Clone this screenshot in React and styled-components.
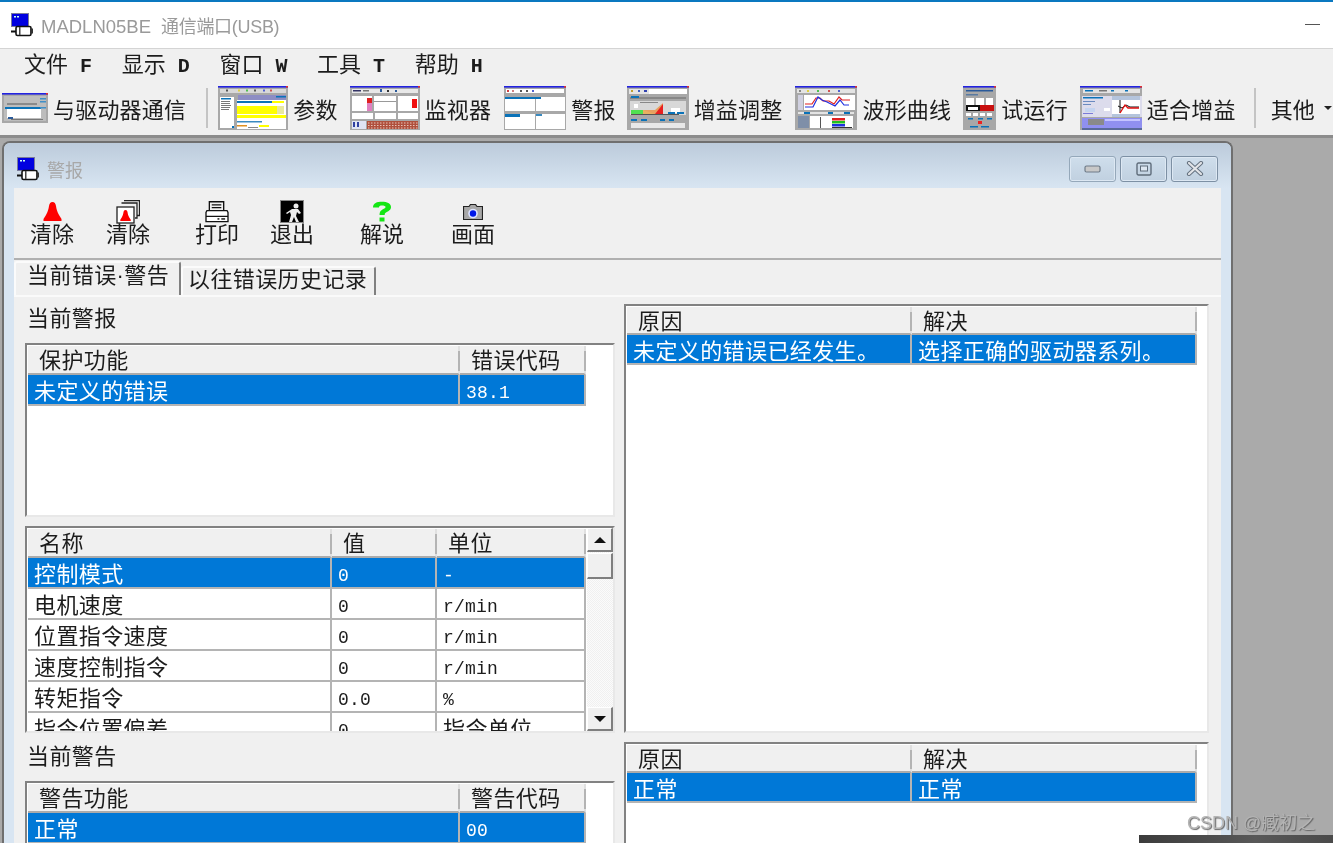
import React from "react";
import styled, { createGlobalStyle } from "styled-components";

const CJK = `"Noto Sans CJK SC", "Noto Sans", sans-serif`;
const MONO = `"Liberation Mono", "Noto Sans CJK SC", monospace`;

const Global = createGlobalStyle`
  html, body { margin: 0; padding: 0; height: 843px; overflow: hidden; background: #aaa; }
  body { font-family: ${CJK}; color: #1c1c1c; }
  * { box-sizing: border-box; }
`;

const Screen = styled.div`
  position: relative;
  width: 1333px;
  height: 843px;
  overflow: hidden;
  display: flex;
  flex-direction: column;
  filter: blur(0.35px);
`;
const TitleBar = styled.header`
  height: 49px;
  flex: none;
  background: #fff;
  border-top: 2px solid #0a78c0;
  border-bottom: 1px solid #d4d4d4;
  display: flex;
  align-items: center;
  padding: 0 13px 0 11px;
`;
const AppTitle = styled.div`
  margin-left: 7px;
  font-family: "Liberation Sans", ${CJK};
  font-size: 18.5px;
  color: #9a9a9a;
  white-space: pre;
  flex: 1;
`;
const TitlePort = styled.span`
  margin-left: 10px;
  font-size: 18px;
  letter-spacing: -0.3px;
`;
const DashBtn = styled.div`
  width: 15px;
  height: 1px;
  margin-top: -2px;
  background: #555;
`;
const MenuBar = styled.nav`
  height: 35px;
  flex: none;
  background: #f0f0f0;
  display: flex;
  align-items: center;
  padding: 0 0 4px 24px;
`;
const MenuItem = styled.div`
  width: 97.7px;
  font-size: 22px;
  line-height: 30px;
  white-space: pre;
`;
const MenuKey = styled.span`
  margin-left: 12px;
  font-family: ${MONO};
  font-size: 20px;
  font-weight: 700;
`;
const ToolBar = styled.div`
  height: 54px;
  flex: none;
  background: #f0f0f0;
  border-bottom: 3px solid;
  border-image: linear-gradient(#e4e4e4 0 33%, #bdbdbd 33% 66%, #8c8c8c 66%) 3;
  display: flex;
  align-items: center;
  padding: 0 0 3px 2px;
`;
const Tool = styled.div`
  display: flex;
  align-items: center;
  gap: 5px;
  margin-left: ${(p) => p.$ml || 0}px;
  flex: none;
  font-size: 22px;
  letter-spacing: 0.2px;
  white-space: nowrap;
`;
const ToolSep = styled.div`
  width: 2px;
  height: 40px;
  background: #c4c4c4;
  margin: 0 ${(p) => p.$r}px 0 ${(p) => p.$l}px;
  flex: none;
`;
const Caret = styled.span`
  width: 0;
  height: 0;
  margin-left: 4px;
  border-top: 4px solid #222;
  border-left: 4px solid transparent;
  border-right: 4px solid transparent;
`;
const Workspace = styled.main`
  flex: 1;
  min-height: 0;
  background: #aaa;
  padding: 3px 0 0 2px;
`;
const Window = styled.section`
  width: 1231px;
  height: 720px;
  border: 2px solid #6f6f6f;
  border-bottom: 0;
  border-radius: 8px 8px 0 0;
  background: #d8e5f2;
  display: flex;
  flex-direction: column;
  padding: 0 10px;
  overflow: hidden;
`;
const WinTitle = styled.div`
  height: 45px;
  flex: none;
  margin: 0 -10px;
  padding: 6px 13px 0 13px;
  background: linear-gradient(#bccbdb, #d8e5f2);
  display: flex;
  align-items: center;
`;
const WinName = styled.div`
  margin-left: 7px;
  flex: 1;
  font-size: 18px;
  color: #a8a8a8;
`;
const WinBtn = styled.div`
  width: 47px;
  height: 26px;
  margin-left: 4px;
  border: 1px solid ${(p) => p.$border || "#95a8ba"};
  border-radius: 3px;
  background: linear-gradient(#cfdeec, #c0d0e0);
  box-shadow: inset 0 0 0 1px #dde8f3;
  display: flex;
  align-items: center;
  justify-content: center;
`;
const Body = styled.div`
  flex: 1;
  min-height: 0;
  background: #f0f0f0;
  display: flex;
  flex-direction: column;
`;
const CmdBar = styled.div`
  height: 72px;
  flex: none;
  border-bottom: 2px solid #b0b0b0;
  display: flex;
  padding-left: 16px;
`;
const Cmd = styled.div`
  width: 44px;
  margin-left: ${(p) => p.$ml || 0}px;
  flex: none;
  display: flex;
  flex-direction: column;
  align-items: center;
  font-size: 22px;
  line-height: 28px;
  white-space: nowrap;
`;
const CmdIcon = styled.div`
  height: 31px;
  padding-top: 14px;
  display: flex;
  align-items: flex-start;
  justify-content: center;
  margin-bottom: -1px;
`;
const TabRow = styled.div`
  height: 37px;
  flex: none;
  display: flex;
  align-items: flex-end;
  border-bottom: 2px solid #fafafa;
`;
const Tab = styled.div`
  height: ${(p) => (p.$active ? 34 : 29)}px;
  width: ${(p) => p.$w}px;
  flex: none;
  padding-left: ${(p) => p.$pl}px;
  border-top: 2px solid #fbfbfb;
  border-left: 2px solid #fbfbfb;
  border-right: 2px solid #808080;
  border-radius: 3px 3px 0 0;
  font-family: "Liberation Sans", ${CJK};
  font-size: 22px;
  line-height: ${(p) => (p.$active ? 25 : 24)}px;
  letter-spacing: 0.4px;
  white-space: nowrap;
`;
const Page = styled.div`
  flex: 1;
  min-height: 0;
  display: flex;
  gap: 9px;
  padding-left: 11px;
  overflow: hidden;
`;
const LeftCol = styled.div`
  width: 590px;
  flex: none;
  display: flex;
  flex-direction: column;
`;
const RightCol = styled.div`
  width: 585px;
  flex: none;
  padding-top: 7px;
  display: flex;
  flex-direction: column;
  gap: 9px;
`;
const Caption = styled.div`
  height: ${(p) => p.$h}px;
  flex: none;
  padding: ${(p) => p.$top}px 0 0 2px;
  font-size: 22px;
  line-height: 30px;
  letter-spacing: 0.4px;
`;
const Frame = styled.div`
  position: relative;
  height: ${(p) => p.$h}px;
  flex: none;
  margin-bottom: ${(p) => p.$mb || 0}px;
  padding: 1px 0 0 1px;
  background: #fff;
  border-style: solid;
  border-color: #828282 #e8e8e8 #e8e8e8 #828282;
  border-width: 2px;
  overflow: hidden;
`;
const Table = styled.div`
  display: grid;
  grid-template-columns: ${(p) => p.$cols};
  grid-template-rows: ${(p) => p.$hh || 29}px;
  grid-auto-rows: ${(p) => p.$rh || 31}px;
  width: ${(p) => p.$w}px;
`;
const Head = styled.div`
  background: #f0f0f0;
  padding-left: 11px;
  font-size: 22px;
  line-height: 25px;
  letter-spacing: 0.4px;
  border-bottom: 2px solid #ababab;
  border-right: 2px solid #e0e0e0;
  position: relative;
  &:not(:last-child)::after {
    content: "";
    position: absolute;
    right: -2px;
    top: 5px;
    bottom: 2px;
    width: 2px;
    background: #b4b4b4;
  }
  &:last-child { border-right: 2px solid #b8b8b8; }
`;
const Cell = styled.div`
  background: ${(p) => (p.$sel ? "#0078d7" : "#fff")};
  color: ${(p) => (p.$sel ? "#fff" : "#1c1c1c")};
  padding-left: 6px;
  font-family: ${MONO};
  font-size: ${(p) => (p.$latin ? 18 : 22)}px;
  line-height: ${(p) => (p.$latin ? 36 : 37)}px;
  letter-spacing: ${(p) => (p.$latin ? 0.2 : 0.4)}px;
  border-bottom: 2px solid #b4b4b4;
  border-right: 2px solid #b4b4b4;
  white-space: nowrap;
  overflow: hidden;
`;
const Scroll = styled.div`
  position: absolute;
  top: 0;
  right: 0;
  bottom: 0;
  width: 26px;
  background: repeating-conic-gradient(#f0f0f0 0 25%, #fbfbfb 0 50%) 0 0 / 2px 2px;
  display: flex;
  flex-direction: column;
`;
const ScrollBtn = styled.div`
  height: ${(p) => p.$h}px;
  margin-top: ${(p) => p.$mt || 0}px;
  flex: none;
  background: #f0f0f0;
  border-style: solid;
  border-color: #fff #7f7f7f #7f7f7f #fff;
  border-width: 1px 2px 2px 1px;
  display: flex;
  align-items: center;
  justify-content: center;
`;
const Arrow = styled.span`
  width: 0;
  height: 0;
  border-left: 6px solid transparent;
  border-right: 6px solid transparent;
  ${(p) => (p.$up ? "border-bottom: 6px solid #111;" : "border-top: 6px solid #111;")}
`;
const Watermark = styled.div`
  position: absolute;
  left: 1187px;
  top: 810px;
  font-family: "Liberation Sans", ${CJK};
  font-size: 18px;
  line-height: 27px;
  color: #b4b4b4;
  text-shadow: 1px 1px 1px #666;
  white-space: nowrap;
`;
const DarkBar = styled.div`
  position: absolute;
  left: 1139px;
  right: 0;
  bottom: 0;
  height: 8px;
  background: linear-gradient(90deg, #3c3c3c, #585858 60%, #4a4a4a);
`;

/* ---------- drawings ---------- */
const Rects = ({ list }) =>
  list.map(([x, y, w, h, fill], i) => <rect key={i} x={x} y={y} width={w} height={h} fill={fill} />);

const BLUE = "#0a72b8";
const Thumb = ({ w, h, rects, children }) => (
  <svg width={w} height={h} viewBox={`0 0 ${w} ${h}`} style={{ flex: "none", display: "block" }}>
    <rect width={w} height={h} fill="#a8a8a8" />
    <rect width={w} height="1.6" fill="#2222e0" />
    <rect x={w - 2} width="2" height="1.6" fill="#e03030" />
    <Rects list={rects} />
    {children}
  </svg>
);

const t1 = [
  [2, 3, 42, 25, "#bdbdbd"], [5, 10, 30, 2, "#8a8a8a"], [3, 14, 36, 2, BLUE], [5, 16, 34, 9, "#fff"],
  [38, 5, 6, 1.5, "#3f8fc8"], [38, 8, 6, 1.5, "#3f8fc8"], [38, 14, 6, 1.5, "#3f8fc8"], [6, 24, 5, 2, "#2a5a9a"], [9, 26, 32, 1, "#777"],
];
const t2 = [
  [2, 3, 66, 4, "#d8d8d8"], [8, 3.5, 2, 2, "#555"], [20, 3.5, 2, 2, "#e0d040"], [28, 3.5, 2, 2, "#50c050"], [36, 3.5, 2, 2, "#555"], [45, 3.5, 2, 2, "#5060d0"], [52, 3.5, 2, 2, "#d05050"],
  [2, 11, 14, 31, "#fff"], [3, 12, 10, 1.5, BLUE], [3, 15, 9, 1, "#777"], [3, 17, 9, 1, "#777"], [3, 19, 10, 1, "#777"], [3, 21, 9, 1, "#777"], [3, 23, 8, 1, "#777"], [14, 40, 2, 2, BLUE],
  [20, 9, 48, 5, "#8d8dc4"], [58, 10, 10, 1.5, BLUE], [19, 14, 49, 29, "#fff"], [19, 15, 35, 2, BLUE], [54, 15, 12, 2, "#ffff00"],
  [19, 20, 47, 8, "#ffff00"], [59, 20, 7, 8, "#e8e8a0"], [19, 29, 49, 3, "#ffff00"], [19, 35, 25, 1.5, "#3a8ac0"],
  [19, 39, 10, 1.5, "#e09020"], [41, 39, 10, 2, "#ffff00"], [30, 41, 10, 1, "#888"],
];
const t3 = [
  [2, 3, 66, 4, "#e8e8e8"], [3, 4, 8, 1.5, "#336"], [13, 4, 6, 1.5, "#777"], [30, 3, 2, 3, "#2a5a9a"], [37, 4, 2, 2, "#333"], [45, 4, 2, 2, "#2a5a9a"],
  [2, 10, 20, 15, "#fff"], [24, 10, 22, 15, "#fff"], [48, 10, 20, 15, "#fff"], [17, 12, 5, 13, "#e080c0"], [17, 12, 5, 5, "#e02020"], [62, 13, 5, 9, "#f01010"], [24, 15, 22, 1, "#999"],
  [2, 27, 21, 6, "#fff"], [25, 27, 21, 6, "#fff"], [48, 27, 20, 6, "#fff"], [2, 35, 14, 8, "#dfe4f4"], [3, 36, 2, 5, "#3040a0"], [7, 36, 2, 5, "#3040a0"],
  [17, 35, 51, 8, "#b0503c"],
];
const t4 = [
  [2, 3, 58, 4, "#fff"], [3, 4, 2, 2, "#d04040"], [8, 4, 2, 2, "#d08080"], [16, 4, 2, 2, "#555"], [22, 4, 2, 2, "#555"], [28, 4, 2, 2, "#5060d0"],
  [1, 11, 30, 14, "#fff"], [32, 11, 29, 14, "#fff"], [1, 11, 36, 2, BLUE], [1, 28, 30, 15, "#fff"], [32, 28, 29, 15, "#fff"], [1, 28, 15, 3, BLUE], [32, 28, 6, 2, "#3a8ac0"],
];
const t5 = [
  [2, 3, 58, 5, "#e4e4e4"], [4, 4, 2, 2, "#c0a030"], [11, 4, 2, 2, "#4060c0"], [17, 4, 3, 2, "#3040b0"], [22, 3, 38, 5, "#fff"],
  [3, 11, 56, 2, "#888"], [4, 10, 8, 2, BLUE], [3, 15, 56, 14, "#d8d8d8"], [7, 18, 4, 4, "#fff"], [13, 16, 18, 1, "#888"],
  [4, 24, 12, 4, "#50e050"], [16, 24, 12, 4, "#e8b060"], [44, 22, 9, 5, "#fff"], [4, 28, 48, 1, "#555"], [4, 33, 6, 2, BLUE], [14, 33, 6, 2, BLUE], [33, 33, 5, 2, BLUE], [42, 33, 5, 2, BLUE],
  [4, 37, 54, 5, "#e8e8e8"], [41, 26, 7, 2, BLUE], [50, 26, 7, 2, BLUE],
];
const t6 = [
  [2, 3, 58, 4, "#e4e4e4"], [4, 4, 2, 2, "#888"], [12, 4, 2, 2, "#e0d040"], [22, 4, 2, 2, "#50c050"], [33, 4, 2, 2, "#d05050"], [43, 4, 2, 2, "#5060d0"],
  [9, 9, 51, 15, "#fff"], [3, 9, 5, 15, "#d0d0e0"], [3, 26, 56, 2, "#e4e4e4"], [9, 26, 6, 2, BLUE], [33, 26, 5, 2, BLUE], [49, 26, 6, 2, BLUE],
  [3, 30, 11, 12, "#7f8fa8"], [15, 30, 43, 12, "#fff"], [25, 31, 1, 11, "#555"], [37, 32, 13, 2.5, "#e02020"], [37, 35, 13, 2.5, "#20c020"], [37, 38, 13, 2.5, "#2030e0"], [37, 41, 20, 1, "#333"],
];
const t7 = [
  [3, 4, 27, 1.5, "#2a5a9a"], [3, 8, 12, 1.5, "#5a7aa0"], [3, 12, 8, 7, "#fff"], [13, 12, 8, 7, "#fff"], [23, 12, 7, 7, "#fff"], [4, 19, 25, 1, "#555"],
  [3, 19, 15, 6, "#111"], [5, 21, 10, 3, "#fff"], [17, 19, 14, 6, "#c81010"], [3, 27, 5, 3, "#fff"], [10, 27, 5, 3, "#fff"], [17, 27, 5, 3, "#fff"], [24, 27, 5, 3, "#fff"],
  [5, 32, 5, 1.5, BLUE], [15, 32, 5, 1.5, BLUE], [24, 32, 5, 1.5, BLUE], [15, 35, 4, 3, "#ee2020"], [7, 40, 8, 1.5, BLUE], [18, 40, 8, 1.5, BLUE],
];
const t8 = [
  [3, 3, 57, 4, "#e4e4e4"], [5, 4, 8, 1.5, BLUE], [19, 4, 8, 1.5, "#777"], [31, 4, 3, 1.5, BLUE], [45, 4, 3, 1.5, BLUE],
  [2, 10, 61, 21, "#dcdcec"], [3, 11, 20, 1.5, BLUE], [3, 15, 12, 1, "#6a8ac0"], [3, 18, 8, 1, "#6a8ac0"], [5, 22, 10, 4, "#c4d4f0"], [3, 27, 10, 1, "#7a7ad8"],
  [24, 22, 6, 3, "#fff"], [32, 10, 28, 21, "#b4c4dc"], [32, 14, 28, 14, "#fff"], [2, 32, 60, 10, "#9090f0"], [8, 33, 16, 6, "#8a8a8a"], [25, 33, 35, 2, "#c4c4ff"], [2, 42, 60, 2, "#5a6a9a"],
];

const Motor = () => (
  <svg width="23" height="24" viewBox="0 0 23 24" style={{ flex: "none" }}>
    <rect x="0.5" y="0.5" width="17" height="13" fill="#0000e0" stroke="#7a7a9a" />
    <rect x="3" y="3" width="2" height="1.5" fill="#cfe" />
    <rect x="6" y="3" width="2" height="1.5" fill="#cfe" />
    <rect x="0" y="17.5" width="5" height="2" fill="#111" />
    <rect x="5" y="13.5" width="15" height="9" rx="1.5" fill="#fff" stroke="#111" strokeWidth="1.6" />
    <rect x="19" y="15.5" width="3" height="5" fill="#333" />
    <rect x="8" y="14" width="1.5" height="8" fill="#444" />
  </svg>
);
const BellShape = ({ s = 1 }) => (
  <path
    transform={`scale(${s})`}
    d="M9.500 0c2 0 3 1.500 3.500 4 .5 3 1 5.500 3 9l2.500 4v2H.5v-2L3 13c2-3.500 2.500-6 3-9 .5-2.500 1.500-4 3.500-4z"
    fill="#fe0000"
  />
);
const Bell = () => (
  <svg width="19" height="19" viewBox="0 0 19 19"><BellShape /></svg>
);
const StackBell = () => (
  <svg width="24" height="24" viewBox="0 0 24 24" style={{ marginTop: -2 }}>
    <path d="M8 .5h15.500v15h-3M5.500 3h15.500v15h-2" fill="none" stroke="#222" strokeWidth="1.300" />
    <rect x="1" y="7" width="17" height="16" fill="#fff" stroke="#222" strokeWidth="1.300" />
    <g transform="translate(4 10)"><BellShape s={0.58} /></g>
  </svg>
);
const Printer = () => (
  <svg width="24" height="22" viewBox="0 0 25 23" style={{ marginTop: -1 }}>
    <path d="M4.500 10V.8h15V10M7 4h10M7 7h10" fill="none" stroke="#111" strokeWidth="1.400" />
    <path d="M2 10h21l1 2v9.500H1V12z" fill="#fff" stroke="#111" strokeWidth="1.400" />
    <path d="M1 16h23" stroke="#111" strokeWidth="1.200" />
    <rect x="13" y="18" width="2" height="1.500" fill="#111" />
    <rect x="17" y="18" width="4" height="1.500" fill="#111" />
  </svg>
);
const Exit = () => (
  <svg width="24" height="23" viewBox="0 0 24 23" style={{ marginTop: -2 }}>
    <rect x="0.500" y="0.500" width="23" height="22" fill="#000" stroke="#888" />
    <circle cx="16" cy="6" r="2.500" fill="#eee" />
    <path d="M12 9h6l3 4-2 1-2-2-1 4 3 6h-3l-2-5-2 5H9l2-7-1-3-3 2-1-1z" fill="#eee" />
  </svg>
);
const Help = () => (
  <svg width="20" height="21" viewBox="0 0 20 21" style={{ marginTop: -1 }}>
    <path d="M1 6.500C1 2 5 .8 10 .8s9 1.700 9 5.200c0 3-2.500 4-5 5.500-1 .7-1.300 1.300-1.300 2.500H7.500c0-3 1-4.300 3-5.500 2-1.200 3-1.500 3-2.500s-1.500-1.500-3.500-1.500-3 .5-3 2z" fill="#14e614" />
    <rect x="7.500" y="16.500" width="5" height="4" fill="#14e614" />
  </svg>
);
const Camera = () => (
  <svg width="20" height="17" viewBox="0 0 20 17" style={{ marginTop: 2 }}>
    <path d="M6 2.500 7.500.5h5L14 2.500h5.500v13H.5v-13z" fill="#a8a8a8" stroke="#222" strokeWidth="1.200" />
    <circle cx="10" cy="9.500" r="4.800" fill="#dfe6ff" />
    <circle cx="10" cy="9.500" r="3.200" fill="#0018e8" />
  </svg>
);

const Row = ({ cells, sel, latin = [] }) =>
  cells.map((c, i) => (
    <Cell key={i} $sel={sel} $latin={latin.includes(i)}>{c}</Cell>
  ));

export default function App() {
  const params = [
    ["控制模式", "0", "-", true],
    ["电机速度", "0", "r/min"],
    ["位置指令速度", "0", "r/min"],
    ["速度控制指令", "0", "r/min"],
    ["转矩指令", "0.0", "%"],
    ["指令位置偏差", "0", "指令单位"],
  ];
  const menus = [["文件", "F"], ["显示", "D"], ["窗口", "W"], ["工具", "T"], ["帮助", "H"]];
  return (
    <Screen>
      <Global />
      <TitleBar>
        <Motor />
        <AppTitle>MADLN05BE<TitlePort>通信端口(USB)</TitlePort></AppTitle>
        <DashBtn />
      </TitleBar>
      <MenuBar>
        {menus.map(([m, k]) => (
          <MenuItem key={m}>{m}<MenuKey>{k}</MenuKey></MenuItem>
        ))}
      </MenuBar>
      <ToolBar>
        <Tool><Thumb w={46} h={30} rects={t1} />与驱动器通信</Tool>
        <ToolSep $l={20} $r={10} />
        <Tool><Thumb w={70} h={44} rects={t2} />参数</Tool>
        <Tool $ml={12}>
          <Thumb w={70} h={44} rects={t3}>
            <path d="M18 37h50M18 39.500h50M18 42h50" stroke="#f4e0d8" strokeWidth="0.800" strokeDasharray="1.500 1.500" />
          </Thumb>
          监视器
        </Tool>
        <Tool $ml={13}><Thumb w={62} h={44} rects={t4} />警报</Tool>
        <Tool $ml={11}>
          <Thumb w={62} h={44} rects={t5}>
            <path d="M16 24h12l8-7v11H28z" fill="#e8a060" />
            <path d="M28 28l8-10v10z" fill="#e82020" />
          </Thumb>
          增益调整
        </Tool>
        <Tool $ml={13}>
          <Thumb w={62} h={44} rects={t6}>
            <path d="M10 18h7l4-6h4l3 3h6l5 3 5-7 3 3h8" fill="none" stroke="#e02020" strokeWidth="1.200" />
            <path d="M10 21h8l5-10 4 3 5 2 8 4 5-6 4 5h5" fill="none" stroke="#2030e0" strokeWidth="1.200" />
          </Thumb>
          波形曲线
        </Tool>
        <Tool $ml={12}><Thumb w={33} h={44} rects={t7} />试运行</Tool>
        <Tool $ml={12}>
          <Thumb w={62} h={44} rects={t8}>
            <path d="M40 14v13M38 20l4 2 4-3 4 2h9" fill="none" stroke="#111" strokeWidth="1" />
            <path d="M40 27l5-8 3 3h11" fill="none" stroke="#e01010" strokeWidth="1.400" />
          </Thumb>
          适合增益
        </Tool>
        <ToolSep $l={18} $r={15} />
        <Tool>其他<Caret /></Tool>
      </ToolBar>
      <Workspace>
        <Window>
          <WinTitle>
            <Motor />
            <WinName>警报</WinName>
            <WinBtn>
              <svg width="17" height="8" viewBox="0 0 17 8"><rect x="1" y="1" width="15" height="6" rx="1.500" fill="#c8c8c8" stroke="#6e7b88" strokeWidth="1.200" /></svg>
            </WinBtn>
            <WinBtn $border="#7d90a4">
              <svg width="16" height="14" viewBox="0 0 16 14"><rect x="1" y="1" width="14" height="12" rx="1.500" fill="none" stroke="#5f6c7a" strokeWidth="1.400" /><rect x="4.500" y="4" width="7" height="5" fill="#dce6f0" stroke="#5f6c7a" /></svg>
            </WinBtn>
            <WinBtn $border="#7d90a4">
              <svg width="18" height="15" viewBox="0 0 18 15"><path d="M3 2l12 11M15 2 3 13" stroke="#667381" strokeWidth="4.200" strokeLinecap="round" /><path d="M3 2l12 11M15 2 3 13" stroke="#e2e4e8" strokeWidth="2.200" strokeLinecap="round" /></svg>
            </WinBtn>
          </WinTitle>
          <Body>
            <CmdBar>
              <Cmd><CmdIcon><Bell /></CmdIcon>清除</Cmd>
              <Cmd $ml={32}><CmdIcon><StackBell /></CmdIcon>清除</Cmd>
              <Cmd $ml={45}><CmdIcon><Printer /></CmdIcon>打印</Cmd>
              <Cmd $ml={31}><CmdIcon><Exit /></CmdIcon>退出</Cmd>
              <Cmd $ml={46}><CmdIcon><Help /></CmdIcon>解说</Cmd>
              <Cmd $ml={47}><CmdIcon><Camera /></CmdIcon>画面</Cmd>
            </CmdBar>
            <TabRow>
              <Tab $active $w={167} $pl={11}>当前错误·警告</Tab>
              <Tab $w={195} $pl={5}>以往错误历史记录</Tab>
            </TabRow>
            <Page>
              <LeftCol>
                <Caption $h={46} $top={4}>当前警报</Caption>
                <Frame $h={174} $mb={9}>
                  <Table $cols="432px 126px" $w={558}>
                    <Head>保护功能</Head>
                    <Head>错误代码</Head>
                    <Row sel cells={["未定义的错误", "38.1"]} latin={[1]} />
                  </Table>
                </Frame>
                <Frame $h={207}>
                  <Table $cols="304px 105px 149px" $w={558}>
                    <Head>名称</Head>
                    <Head>值</Head>
                    <Head>单位</Head>
                    {params.map(([a, b, c, sel]) => (
                      <Row key={a} sel={sel} cells={[a, b, c]} latin={c === "指令单位" ? [1] : [1, 2]} />
                    ))}
                  </Table>
                  <Scroll>
                    <ScrollBtn $h={24}><Arrow $up /></ScrollBtn>
                    <ScrollBtn $h={26} $mt={1} />
                    <ScrollBtn $h={24} $mt={128}><Arrow /></ScrollBtn>
                  </Scroll>
                </Frame>
                <Caption $h={48} $top={6}>当前警告</Caption>
                <Frame $h={80}>
                  <Table $cols="432px 126px" $w={558}>
                    <Head>警告功能</Head>
                    <Head>警告代码</Head>
                    <Row sel cells={["正常", "00"]} latin={[1]} />
                  </Table>
                </Frame>
              </LeftCol>
              <RightCol>
                <Frame $h={429}>
                  <Table $cols="285px 285px" $w={570} $hh={28} $rh={30}>
                    <Head>原因</Head>
                    <Head>解决</Head>
                    <Row sel cells={["未定义的错误已经发生。", "选择正确的驱动器系列。"]} />
                  </Table>
                </Frame>
                <Frame $h={120}>
                  <Table $cols="285px 285px" $w={570} $hh={28} $rh={30}>
                    <Head>原因</Head>
                    <Head>解决</Head>
                    <Row sel cells={["正常", "正常"]} />
                  </Table>
                </Frame>
              </RightCol>
            </Page>
          </Body>
        </Window>
      </Workspace>
      <DarkBar />
      <Watermark>CSDN @臧初之</Watermark>
    </Screen>
  );
}
